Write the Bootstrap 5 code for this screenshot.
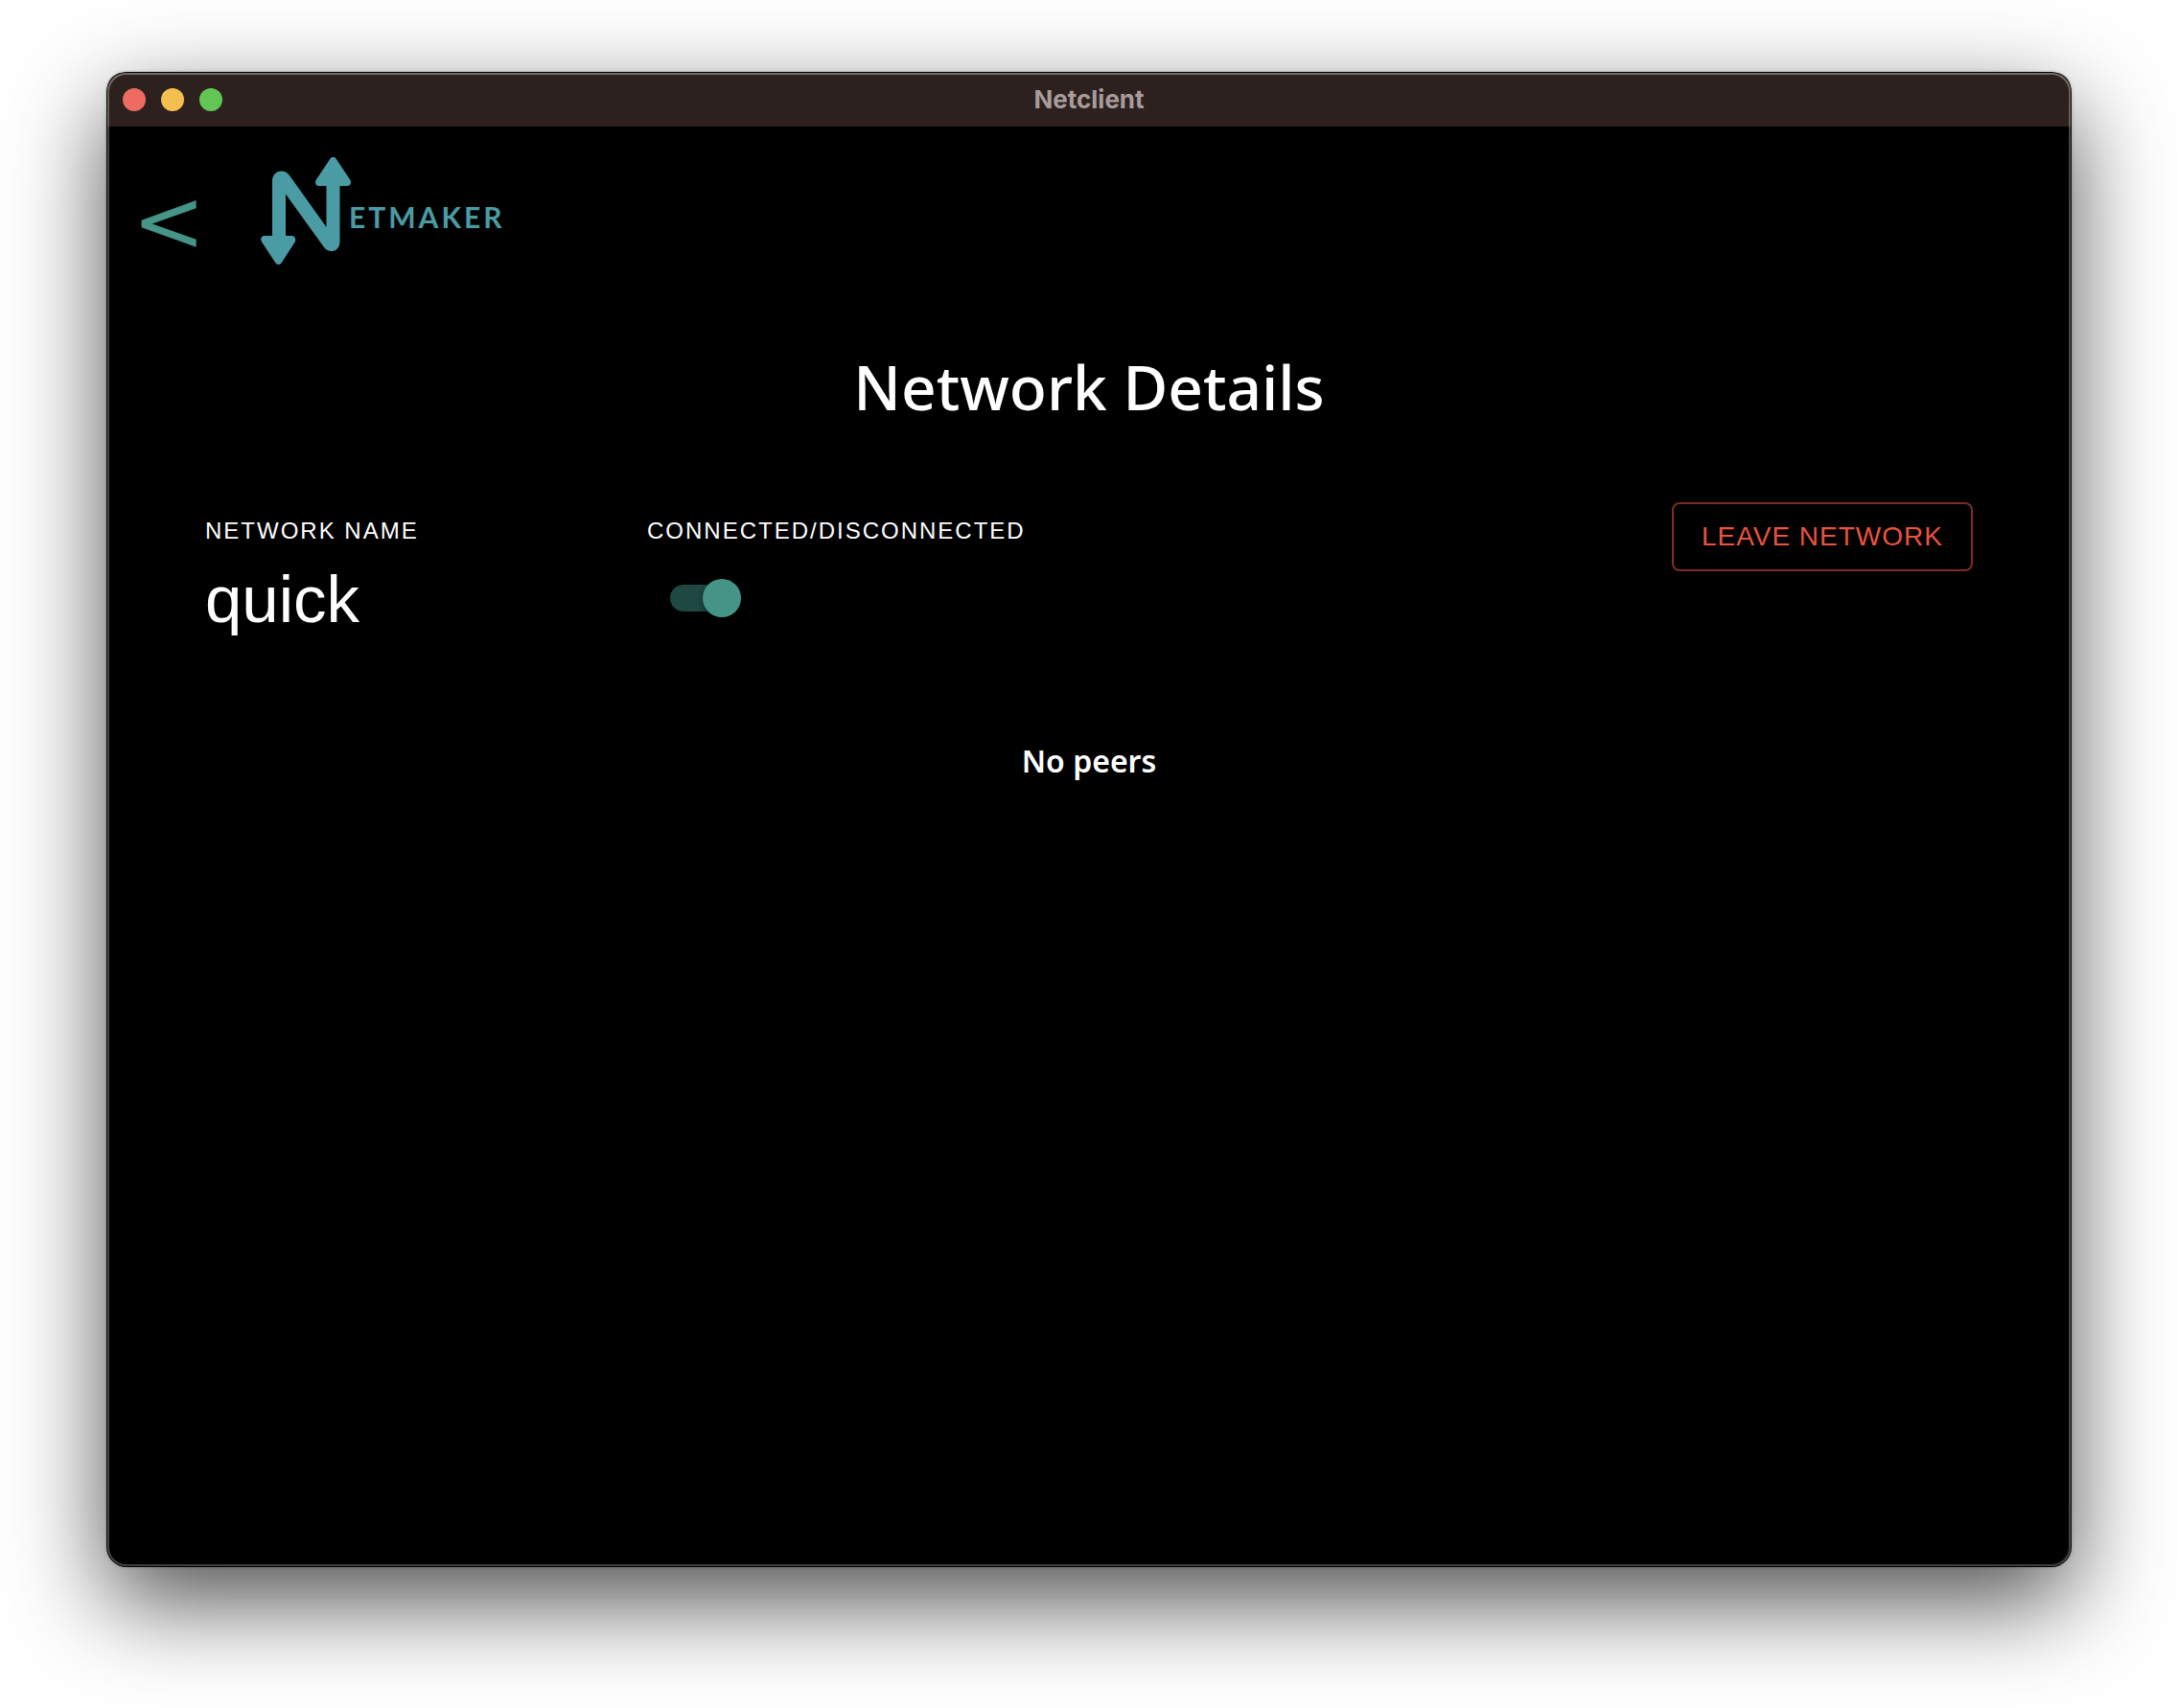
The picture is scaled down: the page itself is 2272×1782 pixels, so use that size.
<!DOCTYPE html>
<html lang="en">
<head>
<meta charset="utf-8">
<meta name="viewport" content="width=device-width, initial-scale=1">
<title>Netclient</title>
<link href="https://cdn.jsdelivr.net/npm/bootstrap@5.3.0/dist/css/bootstrap.min.css" rel="stylesheet">
<style>
  body { background: #fff; font-family: "Liberation Sans", Arial, sans-serif; padding: 76px 112px 148px; }
  .app-window {
    min-height: calc(100vh - 224px);
    background: #000;
    border-radius: 20px;
    box-shadow: 0 0 0 1px #000, 0 0 4px rgba(0,0,0,.3), 0 36px 100px rgba(0,0,0,.7);
  }
  /* light rim drawn over the title bar and the content */
  .app-window::after {
    content: ""; position: absolute; inset: 0; border-radius: 20px; pointer-events: none;
    box-shadow: inset 0 0 0 2px rgba(255,255,255,.24), inset 0 1px 0 1px rgba(255,255,255,.12);
  }
  .title-bar { height: 56px; background: #2c211f; padding: 0 16px; }
  .app-title { font: 700 26px/32px Inter, sans-serif; color: #a89c9b; }
  .dot-row { gap: 16px; }
  .win-dot { width: 24px; height: 24px; border: 0; border-radius: 50%; padding: 0; }
  .dot-close { background: #ed6b60; }
  .dot-min { background: #f5bf4f; }
  .dot-zoom { background: #62c655; }
  .app-header { padding: 32px 26px 0; gap: 58px; }
  .back-link { font-family: "DejaVu Sans", sans-serif; font-size: 91px; line-height: 134px; color: #449488; }
  .brand-mark { width: 256px; height: 116px; color: #4a9ba4; }
  .brand-word { font: 700 30px Lato, sans-serif; letter-spacing: 3px; }
  .page-title { font: 500 64px/88px "Noto Sans", sans-serif; margin: 62px 0 0; }
  .details { padding: 76px 102px 0; }
  .field-label { font-size: 24px; line-height: 28px; letter-spacing: 2px; margin: 16px 0 0; }
  .net-name { font-size: 69px; line-height: 84px; margin-top: 16px; }
  .form-check-input.net-switch {
    position: relative; float: none; width: 68px; height: 28px; border: 0; border-radius: 14px;
    margin: 42px 0 0 24px; background: #1f4842; box-shadow: none;
  }
  .net-switch::before {
    content: ""; position: absolute; left: 0; top: -6px; width: 40px; height: 40px;
    border-radius: 50%; background: #449488; box-shadow: 0 2px 6px rgba(0,0,0,.4);
  }
  .net-switch:checked::before { left: 34px; }
  .leave-btn {
    --bs-btn-color: #e9533f; --bs-btn-border-color: #7c2d25;
    --bs-btn-hover-color: #fff; --bs-btn-hover-bg: #7c2d25;
    border-width: 2px; border-radius: 8px; font-size: 28px; line-height: 40px;
    letter-spacing: 1px; padding: 14px 29px;
  }
  .peers-note { font: 600 32px/44px "Noto Sans", sans-serif; margin: 104px 0 0; }
</style>
</head>
<body>
<div class="app-window position-relative text-white overflow-visible">
  <div class="overflow-hidden rounded-top-4">
    <div class="title-bar row g-0 align-items-center">
      <div class="col d-flex dot-row">
        <button class="win-dot dot-close" type="button" aria-label="Close"></button>
        <button class="win-dot dot-min" type="button" aria-label="Minimize"></button>
        <button class="win-dot dot-zoom" type="button" aria-label="Zoom"></button>
      </div>
      <div class="col-auto app-title">Netclient</div>
      <div class="col"></div>
    </div>
  </div>

  <header class="app-header d-flex align-items-start">
    <a class="back-link text-decoration-none" href="#" aria-label="Back">&lt;</a>
    <svg class="brand-mark" viewBox="0 0 256 116" role="img" aria-label="Netmaker">
      <g fill="currentColor">
        <path d="M12 84V25C12 14 24 11 30 19L68.500 73V26H82.500V88C82.500 99 71 101 66 94L26 38.500V84Z"/>
        <path d="M72.500 1.500Q75.500-2 78.500 1.500L93.500 24Q95 29 91 30H60Q56 29 57.500 24Z"/>
        <path d="M3 82H33Q37 83 36 88L21.500 110.500Q18.500 113.500 15.500 110.500L.800 88Q-1 83 3 82Z"/>
      </g>
      <text class="brand-word" x="92" y="74" fill="currentColor">ETMAKER</text>
    </svg>
  </header>

  <main>
    <h1 class="page-title text-center">Network Details</h1>
    <section class="details">
      <div class="row g-0">
        <div class="col-3">
          <p class="field-label">NETWORK NAME</p>
          <div class="net-name">quick</div>
        </div>
        <div class="col-5">
          <label class="field-label d-block" for="netSwitch">CONNECTED/DISCONNECTED</label>
          <input class="form-check-input net-switch d-block" type="checkbox" role="switch" id="netSwitch" checked>
        </div>
        <div class="col-4 text-end">
          <button class="btn leave-btn" type="button">LEAVE NETWORK</button>
        </div>
      </div>
    </section>
    <p class="peers-note text-center">No peers</p>
  </main>
</div>
<script src="https://cdn.jsdelivr.net/npm/bootstrap@5.3.0/dist/js/bootstrap.bundle.min.js"></script>
</body>
</html>
